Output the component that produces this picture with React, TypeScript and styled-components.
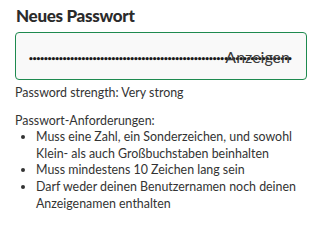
import styled, { createGlobalStyle } from 'styled-components';

const GlobalStyle = createGlobalStyle`
  html, body {
    margin: 0;
    padding: 0;
    background: #ffffff;
  }
  body {
    font-family: Lato, 'Liberation Sans', sans-serif;
    color: #333333;
  }
`;

const Container = styled.div`
  padding: 6px 11px 0px 15px;
  width: 292px;
`;

const Title = styled.h2`
  margin: 0 0 6px 1px;
  font-size: 17px;
  line-height: 20px;
  font-weight: 900;
  letter-spacing: -0.3px;
  color: #2b2b2b;
`;

const Field = styled.div`
  position: relative;
  box-sizing: border-box;
  height: 48px;
  border: 1px solid #1e8a4f;
  border-radius: 4px;
  background-color: #f9f9f9;
  display: flex;
  align-items: center;
  padding: 0px 12px;
`;

const Dots = styled.span`
  font-family: 'DejaVu Sans', sans-serif;
  font-size: 9px;
  font-weight: 700;
  letter-spacing: -2px;
  color: #1a1a1a;
  white-space: nowrap;
  padding-top: 6px;
`;

const Toggle = styled.span`
  position: absolute;
  right: 16px;
  top: 50%;
  transform: translateY(-50%);
  font-size: 16px;
  color: #3a3a3a;
`;

const Strength = styled.p`
  margin: 5px 0px 0px;
  font-size: 12.4px;
  line-height: 16.6px;
`;

const Requirements = styled.div`
  margin-top: 11px;
  font-size: 12.4px;
  line-height: 16.6px;
`;

const List = styled.ul`
  margin: 0;
  padding-left: 21px;
`;

const rules = [
  'Muss eine Zahl, ein Sonderzeichen, und sowohl Klein- als auch Großbuchstaben beinhalten',
  'Muss mindestens 10 Zeichen lang sein',
  'Darf weder deinen Benutzernamen noch deinen Anzeigenamen enthalten',
];

function App() {
  return (
    <>
      <GlobalStyle />
      <Container>
        <Title>Neues Passwort</Title>
        <Field>
          <Dots>{'•'.repeat(70)}</Dots>
          <Toggle>Anzeigen</Toggle>
        </Field>
        <Strength>Password strength: Very strong</Strength>
        <Requirements>
          Passwort-Anforderungen:
          <List>
            {rules.map((rule) => (
              <li key={rule}>{rule}</li>
            ))}
          </List>
        </Requirements>
      </Container>
    </>
  );
}

export default App;
